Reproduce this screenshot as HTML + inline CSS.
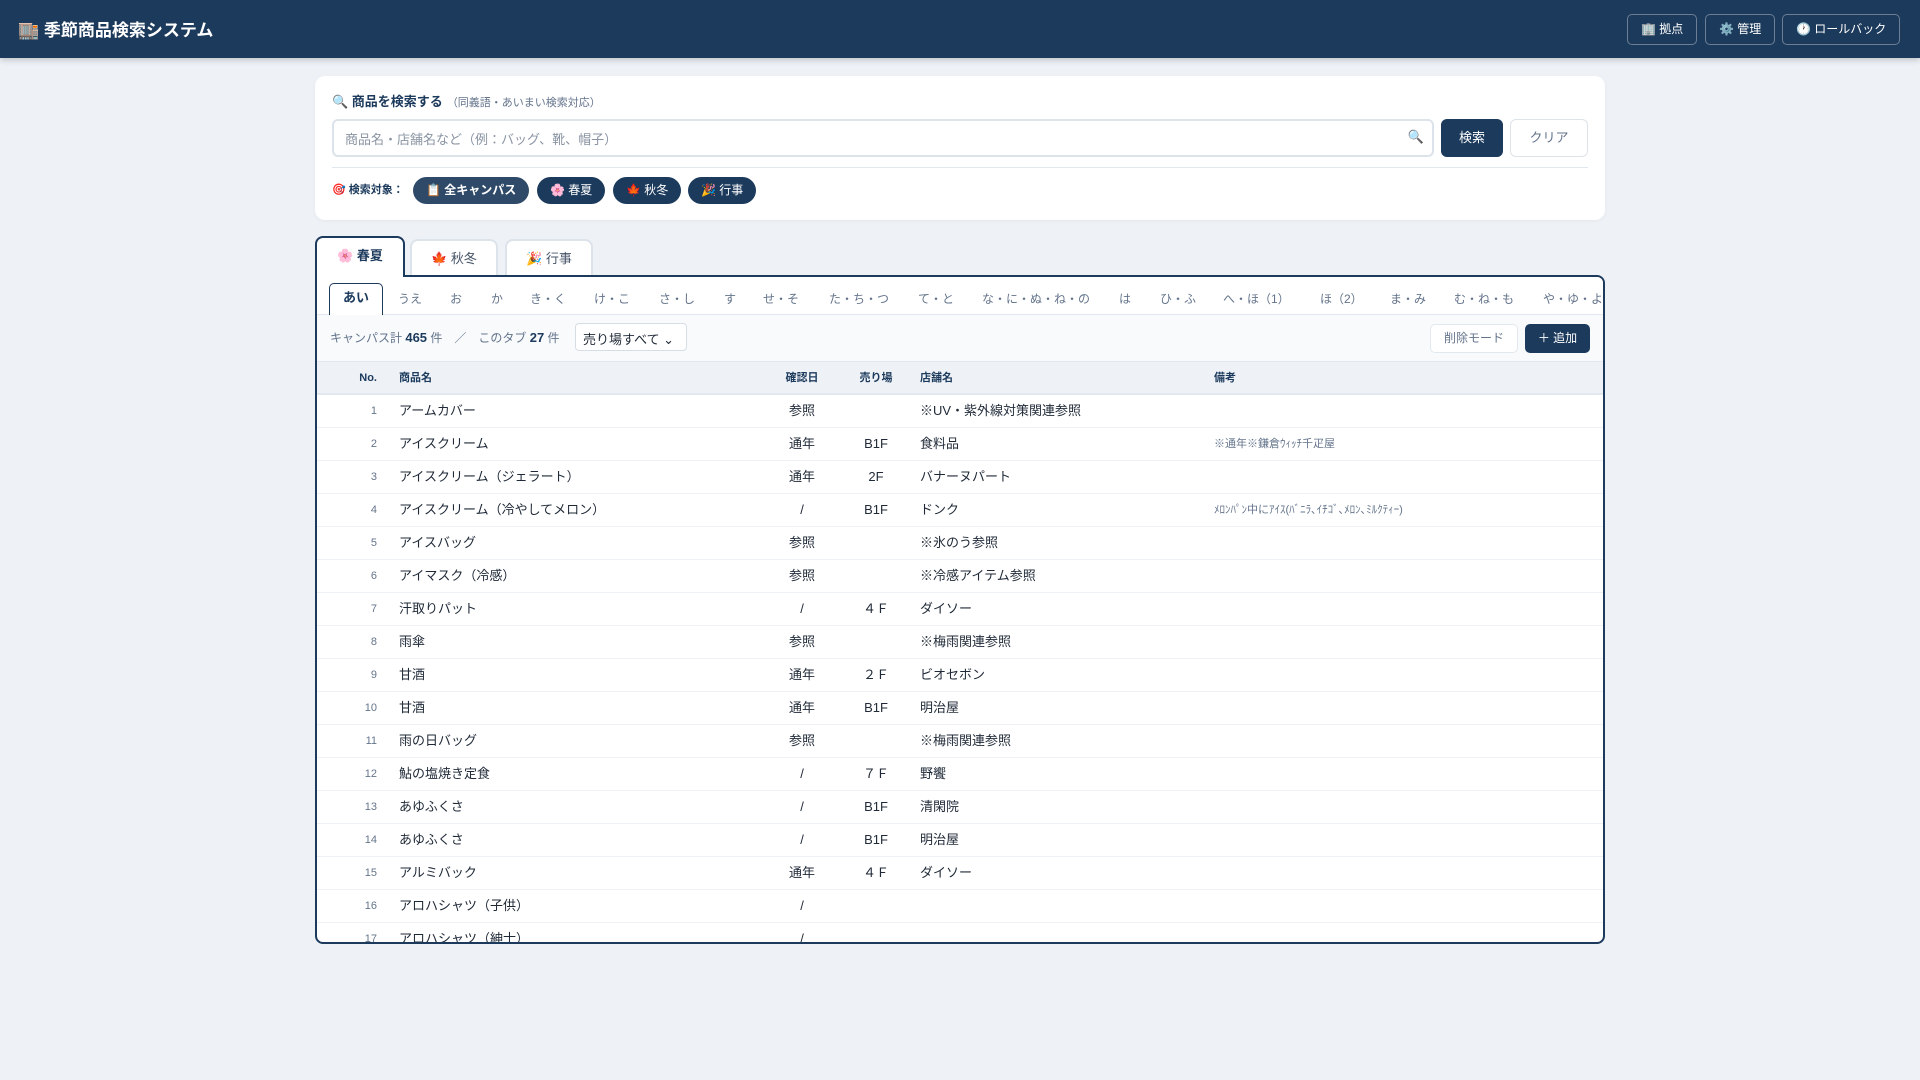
<!DOCTYPE html>
<html><head><meta charset="utf-8"><style>
*{box-sizing:border-box;margin:0;padding:0}
body{width:1920px;height:1080px;background:#eef2f7;font-family:"Liberation Sans","Noto Sans CJK JP",sans-serif;color:#1f2937;position:relative;overflow:hidden}
.hdr{position:absolute;left:0;top:0;width:1920px;height:58px;background:#1c3a5c;box-shadow:0 2px 6px rgba(0,0,0,.2)}
.hdr .t{position:absolute;left:18px;top:16px;color:#fff;font-size:17px;font-weight:bold}
.hb{position:absolute;top:14px;height:31px;border:1px solid rgba(255,255,255,.35);border-radius:5px;color:#fff;font-size:12px;line-height:29px;padding:0 13px}
.card{position:absolute;left:315px;top:76px;width:1290px;height:144px;background:#fff;border-radius:10px;box-shadow:0 1px 4px rgba(0,0,0,.05)}
.lbl{position:absolute;left:17px;top:15px;font-size:13px;font-weight:bold;color:#1c3a5c}
.lbl span{font-weight:normal;font-size:11px;color:#64748b;margin-left:4px}
.inp{position:absolute;left:17px;top:43px;width:1102px;height:38px;border:2px solid #dde3ea;border-radius:6px;font-size:13px;color:#8a94a3;padding:8px 11px}
.bs{position:absolute;left:1126px;top:43px;width:62px;height:38px;background:#1c3a5c;color:#fff;border-radius:6px;font-size:13px;text-align:center;line-height:38px}
.bc{position:absolute;left:1195px;top:43px;width:78px;height:38px;border:1px solid #dde3ea;color:#64748b;border-radius:6px;font-size:13px;text-align:center;line-height:36px}
.sep{position:absolute;left:17px;top:91px;width:1256px;height:1px;background:#e2e8f0}
.tg{position:absolute;top:101px;font-size:11px;font-weight:bold;color:#1c3a5c}
.pill{position:absolute;top:101px;height:27px;border-radius:14px;background:#1c3a5c;color:#fff;font-size:12px;line-height:27px;padding:0 13px;white-space:nowrap}
.tab{position:absolute;top:239px;height:38px;width:88px;background:#fff;border:2px solid #dde3ea;border-bottom:none;border-radius:8px 8px 0 0;font-size:13px;color:#475569;text-align:center;line-height:36px}
.tab.a{top:236px;height:41px;border-color:#1c3a5c;color:#1c3a5c;font-weight:bold;width:90px;z-index:3}
.box{position:absolute;left:315px;top:275px;width:1290px;height:669px;border:2px solid #1c3a5c;border-radius:0 8px 8px 8px;background:#fff;overflow:hidden}
.alpha{position:absolute;left:0;top:0;width:1290px;height:38px;background:#fff;border-bottom:1px solid #e2e8f0;white-space:nowrap;font-size:12px;color:#64748b}
.alpha span{position:absolute;top:13px}
.alpha .on{top:6px;left:12px;width:54px;height:32px;border:1px solid #1c3a5c;border-bottom:none;border-radius:5px 5px 0 0;color:#1c3a5c;font-weight:bold;text-align:center;line-height:28px;font-size:13px;background:#fff}
.tb{position:absolute;left:0;top:38px;width:1290px;height:47px;background:#f8fafc;border-bottom:1px solid #e2e8f0;font-size:12px;color:#64748b}
.tb b{color:#1c3a5c;font-size:13px}
.sel{position:absolute;left:258px;top:8px;width:112px;height:28px;border:1px solid #d7dde5;border-radius:4px;background:#fff;font-size:13px;color:#1f2937;padding:5px 7px}
.dm{position:absolute;left:1113px;top:9px;width:88px;height:29px;border:1px solid #e2e8f0;border-radius:5px;background:#fff;text-align:center;line-height:27px;font-size:12px;color:#64748b}
.ad{position:absolute;left:1208px;top:9px;width:65px;height:29px;border-radius:5px;background:#1c3a5c;color:#fff;text-align:center;line-height:29px;font-size:12px}
.th{position:absolute;left:0;top:85px;width:1290px;height:33px;background:#eef2f7;border-bottom:2px solid #e2e8f0;font-size:11px;font-weight:bold;color:#1c3a5c}
.th span,.r span{position:absolute;top:0;line-height:32px;white-space:nowrap}
.r{position:absolute;left:0;width:1290px;height:33px;border-bottom:1px solid #eef1f5;font-size:13px;color:#1f2937}
.n{width:60px;text-align:right;left:0;color:#64748b;font-size:11px}
.c1{left:82px}.c2{left:455px;width:60px;text-align:center}.c3{left:529px;width:60px;text-align:center}.c4{left:603px}.c5{left:897px;font-size:11px;color:#64748b}
</style></head><body>
<div class="hdr"><div class="t">🏬 季節商品検索システム</div>
<div class="hb" style="left:1627px">🏢 拠点</div>
<div class="hb" style="left:1705px">⚙️ 管理</div>
<div class="hb" style="left:1782px">🕐 ロールバック</div></div>
<div class="card">
<div class="lbl">🔍 商品を検索する<span>（同義語・あいまい検索対応）</span></div>
<div class="inp">商品名・店舗名など（例：バッグ、靴、帽子）<span style="position:absolute;right:8px;top:8px">🔍</span></div>
<div class="bs">検索</div><div class="bc">クリア</div>
<div class="sep"></div>
<div class="tg" style="left:17px;line-height:27px">🎯 検索対象：</div>
<div class="pill" style="left:98px;background:#2f4a68;font-weight:bold">📋 全キャンパス</div>
<div class="pill" style="left:222px">🌸 春夏</div>
<div class="pill" style="left:298px">🍁 秋冬</div>
<div class="pill" style="left:373px">🎉 行事</div>
</div>
<div class="tab a" style="left:315px">🌸 春夏</div>
<div class="tab" style="left:410px">🍁 秋冬</div>
<div class="tab" style="left:505px">🎉 行事</div>
<div class="box">
<div class="alpha"><span class="on">あい</span>
<span style="left:81px">うえ</span><span style="left:133px">お</span><span style="left:174px">か</span><span style="left:213px">き・く</span><span style="left:277px">け・こ</span><span style="left:342px">さ・し</span><span style="left:407px">す</span><span style="left:446px">せ・そ</span><span style="left:512px">た・ち・つ</span><span style="left:601px">て・と</span><span style="left:665px">な・に・ぬ・ね・の</span><span style="left:802px">は</span><span style="left:843px">ひ・ふ</span><span style="left:906px">へ・ほ（1）</span><span style="left:1003px">ほ（2）</span><span style="left:1073px">ま・み</span><span style="left:1137px">む・ね・も</span><span style="left:1226px">や・ゆ・よ</span></div>
<div class="tb"><span style="position:absolute;left:13px;top:14px">キャンパス計 <b>465</b> 件　／　このタブ <b>27</b> 件</span>
<div class="sel">売り場すべて ⌄</div><div class="dm">削除モード</div><div class="ad">＋ 追加</div></div>
<div class="th"><span class="n" style="color:#1c3a5c">No.</span><span class="c1">商品名</span><span class="c2">確認日</span><span class="c3">売り場</span><span class="c4">店舗名</span><span class="c5" style="color:#1c3a5c">備考</span></div>
<div class="r" style="top:118px"><span class="n">1</span><span class="c1">アームカバー</span><span class="c2">参照</span><span class="c3"></span><span class="c4">※UV・紫外線対策関連参照</span></div>
<div class="r" style="top:151px"><span class="n">2</span><span class="c1">アイスクリーム</span><span class="c2">通年</span><span class="c3">B1F</span><span class="c4">食料品</span><span class="c5">※通年※鎌倉ｳｨｯﾁ千疋屋</span></div>
<div class="r" style="top:184px"><span class="n">3</span><span class="c1">アイスクリーム（ジェラート）</span><span class="c2">通年</span><span class="c3">2F</span><span class="c4">バナーヌパート</span></div>
<div class="r" style="top:217px"><span class="n">4</span><span class="c1">アイスクリーム（冷やしてメロン）</span><span class="c2">/</span><span class="c3">B1F</span><span class="c4">ドンク</span><span class="c5">ﾒﾛﾝﾊﾟﾝ中にｱｲｽ(ﾊﾞﾆﾗ､ｲﾁｺﾞ､ﾒﾛﾝ､ﾐﾙｸﾃｨｰ)</span></div>
<div class="r" style="top:250px"><span class="n">5</span><span class="c1">アイスバッグ</span><span class="c2">参照</span><span class="c4">※氷のう参照</span></div>
<div class="r" style="top:283px"><span class="n">6</span><span class="c1">アイマスク（冷感）</span><span class="c2">参照</span><span class="c4">※冷感アイテム参照</span></div>
<div class="r" style="top:316px"><span class="n">7</span><span class="c1">汗取りパット</span><span class="c2">/</span><span class="c3">４Ｆ</span><span class="c4">ダイソー</span></div>
<div class="r" style="top:349px"><span class="n">8</span><span class="c1">雨傘</span><span class="c2">参照</span><span class="c4">※梅雨関連参照</span></div>
<div class="r" style="top:382px"><span class="n">9</span><span class="c1">甘酒</span><span class="c2">通年</span><span class="c3">２Ｆ</span><span class="c4">ビオセボン</span></div>
<div class="r" style="top:415px"><span class="n">10</span><span class="c1">甘酒</span><span class="c2">通年</span><span class="c3">B1F</span><span class="c4">明治屋</span></div>
<div class="r" style="top:448px"><span class="n">11</span><span class="c1">雨の日バッグ</span><span class="c2">参照</span><span class="c4">※梅雨関連参照</span></div>
<div class="r" style="top:481px"><span class="n">12</span><span class="c1">鮎の塩焼き定食</span><span class="c2">/</span><span class="c3">７Ｆ</span><span class="c4">野饗</span></div>
<div class="r" style="top:514px"><span class="n">13</span><span class="c1">あゆふくさ</span><span class="c2">/</span><span class="c3">B1F</span><span class="c4">清閑院</span></div>
<div class="r" style="top:547px"><span class="n">14</span><span class="c1">あゆふくさ</span><span class="c2">/</span><span class="c3">B1F</span><span class="c4">明治屋</span></div>
<div class="r" style="top:580px"><span class="n">15</span><span class="c1">アルミバック</span><span class="c2">通年</span><span class="c3">４Ｆ</span><span class="c4">ダイソー</span></div>
<div class="r" style="top:613px"><span class="n">16</span><span class="c1">アロハシャツ（子供）</span><span class="c2">/</span></div>
<div class="r" style="top:646px"><span class="n">17</span><span class="c1">アロハシャツ（紳士）</span><span class="c2">/</span></div>
</div>
</body></html>
